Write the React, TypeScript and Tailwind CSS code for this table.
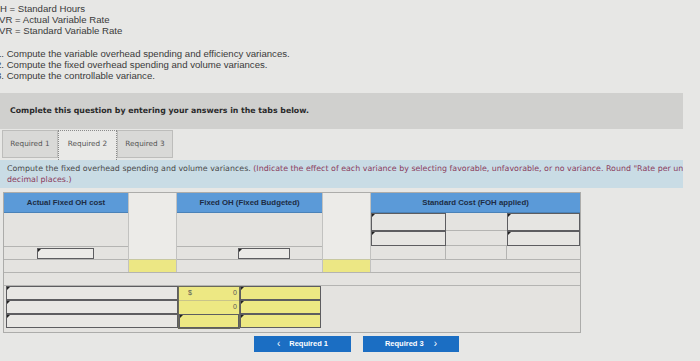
const sans = { fontFamily: '"Liberation Sans", Arial, sans-serif' };
const verd = { fontFamily: '"DejaVu Sans", Verdana, sans-serif' };

function Marker() {
  return <span className="absolute left-0 top-0 w-0 h-0 border-t-[3px] border-r-[3px] border-t-[#222] border-r-transparent" />;
}

function Box({ className }: { className: string }) {
  return (
    <div className={"relative border border-[#5d5d60] " + className}>
      <Marker />
    </div>
  );
}

function Header({ children }: { children: React.ReactNode }) {
  return (
    <div className="h-[20px] bg-[#5b9ad8] border-b border-[#4a82b8] flex items-center justify-center text-[7.8px] font-bold text-[#1d2c44]" style={sans}>
      {children}
    </div>
  );
}

function Gap() {
  return (
    <div className="w-[49px] flex flex-col border-x border-[#c2c2c0]">
      <div className="h-[66px] bg-[#ecebe8]" />
      <div className="h-[13px] bg-[#ece784] border-t border-[#c8c8a0]" />
    </div>
  );
}

export default function App() {
  return (
    <div className="w-[700px] h-[361px] overflow-hidden bg-[#e7e7e5] text-[#3a3a3a]">
      <div className="pt-[3px] text-[9.6px] leading-[11px]" style={sans}>
        <div>H = Standard Hours</div>
        <div className="-ml-[1px]">VR = Actual Variable Rate</div>
        <div className="-ml-[1px]">VR = Standard Variable Rate</div>
      </div>
      <div className="mt-[12px] text-[9.6px] leading-[11px]" style={sans}>
        <div className="-ml-[4px]">1. Compute the variable overhead spending and efficiency variances.</div>
        <div className="-ml-[4px]">2. Compute the fixed overhead spending and volume variances.</div>
        <div className="-ml-[4px]">3. Compute the controllable variance.</div>
      </div>

      <div className="mt-[12px] w-[683px] h-[36px] bg-[#d0d0ce] flex items-center pl-[10px]">
        <span className="text-[7.8px] font-bold text-[#2a2a2a]" style={verd}>
          Complete this question by entering your answers in the tabs below.
        </span>
      </div>

      <div className="mt-[1px] flex pl-[2px] h-[30px] items-end text-[7.3px] text-[#555]" style={verd}>
        <div className="w-[56px] h-[28px] mb-[2px] bg-[#d9d9d7] border border-[#bdbdbb] flex items-center justify-center">Required 1</div>
        <div className="w-[59px] h-[30px] bg-[#e9e9e7] border border-dotted border-[#8a8a8a] border-b-0 flex items-center justify-center pb-[2px]">Required 2</div>
        <div className="w-[56px] h-[28px] mb-[2px] bg-[#d9d9d7] border border-[#bdbdbb] flex items-center justify-center">Required 3</div>
      </div>

      <div className="w-[683px] h-[28px] bg-[#c9dce5] overflow-hidden">
        <div className="w-[735px] pl-[7px] pt-[3px] text-[7.9px] leading-[11px]" style={verd}>
          <span className="text-[#4a4a4a]">Compute the fixed overhead spending and volume variances. </span>
          <span className="text-[#8a3b5c]">
            (Indicate the effect of each variance by selecting favorable, unfavorable, or no variance. Round "Rate per unit" to 2 decimal places.)
          </span>
        </div>
      </div>

      <div className="mt-[4px] ml-[3px] w-[578px] border border-[#acacaa] bg-[#e4e3e0]">
        <div className="flex">
          <div className="w-[124px] flex flex-col">
            <Header>Actual Fixed OH cost</Header>
            <div className="h-[33px]" />
            <div className="h-[13px] border-t border-[#b4b4b2] pl-[33px] pt-px">
              <Box className="w-[57px] h-[11px] bg-[#ebeae7]" />
            </div>
            <div className="h-[13px] border-t border-[#b4b4b2]" />
          </div>
          <Gap />
          <div className="w-[145px] flex flex-col">
            <Header>Fixed OH (Fixed Budgeted)</Header>
            <div className="h-[33px]" />
            <div className="h-[13px] border-t border-[#b4b4b2] pl-[61px] pt-px">
              <Box className="w-[52px] h-[11px] bg-[#ebeae7]" />
            </div>
            <div className="h-[13px] border-t border-[#b4b4b2]" />
          </div>
          <Gap />
          <div className="flex-1 flex flex-col">
            <Header>Standard Cost (FOH applied)</Header>
            <div className="grid grid-cols-[75px_61px_1fr] grid-rows-[18px_15px_13px]">
              <Box className="bg-[#e6e5e2]" />
              <div className="border-b border-[#b4b4b2]" />
              <Box className="bg-[#e6e5e2]" />
              <Box className="bg-[#e6e5e2]" />
              <div className="border-b border-[#b4b4b2]" />
              <Box className="bg-[#e6e5e2]" />
              <div className="border-r border-[#b4b4b2]" />
              <div className="border-r border-[#b4b4b2]" />
              <div />
            </div>
            <div className="h-[13px] border-t border-[#b4b4b2]" />
          </div>
        </div>

        <div className="h-[13px] border-t border-[#b4b4b2]" />

        <div className="flex border-t border-[#b4b4b2] pl-[2px] pb-[3px] text-[7px]" style={sans}>
          <div className="w-[172px] flex flex-col">
            <Box className="h-[14px] bg-[#e8e7e4]" />
            <Box className="h-[14px] bg-[#e8e7e4]" />
            <Box className="h-[14px] bg-[#e8e7e4]" />
          </div>
          <div className="w-[62px] flex flex-col border border-[#6a6a5a] bg-[#ede883]">
            <div className="h-[14px] flex items-center justify-between pl-[9px] pr-[2px] border-b border-[#c9c48a] text-[#555]">
              <span>$</span>
              <span>0</span>
            </div>
            <div className="h-[13px] flex items-center justify-end pr-[2px] text-[#555]">0</div>
            <Box className="h-[14px] bg-[#ede883]" />
          </div>
          <div className="w-[81px] flex flex-col">
            <Box className="h-[14px] bg-[#ede883]" />
            <Box className="h-[14px] bg-[#ede883]" />
            <Box className="h-[14px] bg-[#ede883]" />
          </div>
        </div>
      </div>

      <div className="mt-[3px] ml-[254px] flex gap-[12px] text-[7.5px] font-bold text-white" style={sans}>
        <div className="w-[97px] h-[16px] bg-[#1b6ec3] flex items-center justify-center gap-[9px]">
          <span className="font-normal text-[10px] leading-none">‹</span>
          <span>Required 1</span>
        </div>
        <div className="w-[96px] h-[16px] bg-[#1b6ec3] flex items-center justify-center gap-[10px]">
          <span>Required 3</span>
          <span className="font-normal text-[10px] leading-none">›</span>
        </div>
      </div>
    </div>
  );
}
